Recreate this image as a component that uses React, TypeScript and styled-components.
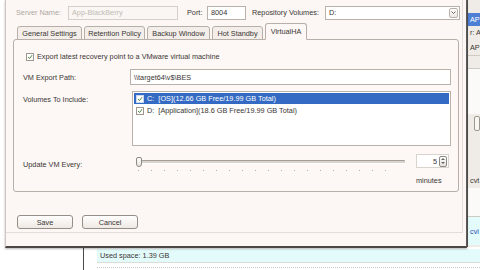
import styled, { createGlobalStyle } from 'styled-components';

const GlobalStyle = createGlobalStyle`
  html, body {
    margin: 0;
    padding: 0;
    background: #fff;
  }
  body {
    width: 480px;
    height: 270px;
    overflow: hidden;
    font-family: "Liberation Sans", Arial, sans-serif;
    font-size: 7.3px;
    color: #3a3634;
  }
`;

const Screen = styled.div`
  position: relative;
  width: 480px;
  height: 270px;
  display: flex;
  overflow: hidden;
`;

/* background application, mostly covered by the dialog */
const LeftNav = styled.div`
  width: 83px;
  flex-shrink: 0;
  background: #fff;
  border-right: 1px solid #4a4a4a;
`;
const Main = styled.div`
  flex: 1;
  min-width: 0;
  display: flex;
  flex-direction: column;
  background: #fff;
`;
const Upper = styled.div`
  height: 247px;
  display: flex;
  flex-shrink: 0;
`;
const Covered = styled.div`
  width: 383px;
  flex-shrink: 0;
  background: #f3f0ec;
`;
const Detail = styled.div`
  flex: 1;
  min-width: 0;
  border-left: 1px solid #555;
  background: #efece7;
  display: flex;
  flex-direction: column;
  padding-top: 13px;
  white-space: nowrap;
  overflow: hidden;
`;
const DetailHead = styled.div`
  height: 13px;
  line-height: 13px;
  background: #4d7fd4;
  color: #fff;
  padding-left: 2px;
`;
const DetailLine = styled.div<{ $h: number; $line?: boolean; $bg?: string }>`
  height: ${(p) => p.$h}px;
  flex-shrink: 0;
  display: flex;
  align-items: center;
  padding-left: 2px;
  background: ${(p) => p.$bg || 'transparent'};
  border-bottom: ${(p) => (p.$line ? '1px solid #cfcac3' : 'none')};
`;
const DetailButton = styled.div`
  width: 14px;
  height: 13px;
  margin-left: 4px;
  border: 1px solid #9d978f;
  border-radius: 2px;
  background: #f8f6f2;
`;
const LinkText = styled.span`
  color: #2a4fb8;
`;
const Bottom = styled.div`
  flex: 1;
  padding: 2px 0 0 13px;
  background: #fff;
`;
const UsedSpace = styled.div`
  height: 13px;
  line-height: 13px;
  background: #e4fbfb;
  padding-left: 3px;
  border-bottom: 1px solid #dcdcd6;
`;
const Dotted = styled.div`
  margin-top: 4px;
  border-top: 1px dotted #c8c8c8;
`;

/* dialog */
const Dialog = styled.div`
  position: absolute;
  left: 5px;
  top: 0;
  width: 462px;
  height: 248px;
  box-sizing: border-box;
  background: #fcf7f5;
  border-left: 1px solid #cfc7c1;
  border-right: 1px solid #5d5a57;
  border-bottom: 2px solid #4a4744;
  box-shadow: 0 1px 2px rgba(0, 0, 0, 0.3);
`;
const DialogBody = styled.div`
  height: 233px;
  margin-right: 3px;
  box-sizing: border-box;
  border-right: 1px solid #e4ddd8;
  border-bottom: 1px solid #e4ddd8;
  padding: 5px 0 0 7px;
  display: flex;
  flex-direction: column;
`;
const TopRow = styled.div`
  display: flex;
  align-items: center;
  height: 15px;
`;
const Label = styled.span<{ $w: number; $muted?: boolean; $ml?: number }>`
  width: ${(p) => p.$w}px;
  margin-left: ${(p) => p.$ml || 0}px;
  flex-shrink: 0;
  white-space: nowrap;
  color: ${(p) => (p.$muted ? '#aea7a1' : '#3a3634')};
`;
const TextBox = styled.div<{ $w: number; $disabled?: boolean; $h?: number }>`
  width: ${(p) => p.$w}px;
  height: ${(p) => p.$h || 14}px;
  box-sizing: border-box;
  border: 1px solid ${(p) => (p.$disabled ? '#d6cfc9' : '#b9b2ab')};
  background: ${(p) => (p.$disabled ? '#faf6f3' : '#fff')};
  color: ${(p) => (p.$disabled ? '#c3bbb5' : '#3a3634')};
  display: flex;
  align-items: center;
  padding-left: 3px;
  white-space: nowrap;
  flex-shrink: 0;
`;
const Combo = styled(TextBox)`
  justify-content: space-between;
  padding-right: 1px;
`;
const DropButton = styled.div`
  width: 9px;
  height: 10px;
  box-sizing: border-box;
  border: 1px solid #b9b2ab;
  border-radius: 2px;
  background: linear-gradient(#fff, #ebe6e1);
  display: flex;
  align-items: center;
  justify-content: center;
`;

const Tabs = styled.div`
  display: flex;
  align-items: flex-end;
  gap: 2px;
  margin: 2px 0 0 4px;
  height: 18px;
  position: relative;
  z-index: 1;
`;
const Tab = styled.div<{ $w: number; $active?: boolean }>`
  width: ${(p) => p.$w}px;
  height: ${(p) => (p.$active ? 17 : 14)}px;
  box-sizing: border-box;
  border: 1px solid #b7afa8;
  border-bottom: ${(p) => (p.$active ? '1px solid #fdf8f6' : '1px solid #b7afa8')};
  border-radius: 3px 3px 0 0;
  background: ${(p) => (p.$active ? '#fdf8f6' : '#f3eee9')};
  display: flex;
  align-items: center;
  justify-content: center;
  white-space: nowrap;
`;
const Panel = styled.div`
  margin-top: -1px;
  width: 446px;
  height: 153px;
  box-sizing: border-box;
  border: 1px solid #b7afa8;
  border-radius: 3px;
  background: #fdf8f6;
  padding: 12px 0 0 9px;
  display: flex;
  flex-direction: column;
`;
const CheckRow = styled.div`
  display: flex;
  align-items: center;
  gap: 3px;
  margin-left: 3px;
  height: 9px;
`;
const Check = styled.span<{ $onBlue?: boolean }>`
  width: 8px;
  height: 8px;
  box-sizing: border-box;
  border: 1px solid ${(p) => (p.$onBlue ? '#c9d6ef' : '#9f978f')};
  background: #fff;
  display: inline-flex;
  align-items: center;
  justify-content: center;
  flex-shrink: 0;
`;
const FormRow = styled.div<{ $mt: number }>`
  display: flex;
  align-items: flex-start;
  margin-top: ${(p) => p.$mt}px;
`;
const FormLabel = styled.span`
  width: 107px;
  flex-shrink: 0;
  padding-top: 4px;
`;
const ListBox = styled.div`
  width: 319px;
  height: 55px;
  box-sizing: border-box;
  border: 1px solid #b9b2ab;
  background: #fff;
  padding: 1px;
  margin-left: 2px;
`;
const ListItem = styled.div<{ $selected?: boolean }>`
  height: 11px;
  margin-bottom: 1px;
  display: flex;
  align-items: center;
  gap: 3px;
  padding-left: 2px;
  white-space: pre;
  background: ${(p) => (p.$selected ? '#346ac3' : 'transparent')};
  color: ${(p) => (p.$selected ? '#fff' : '#3a3634')};
`;
const SliderRow = styled.div`
  display: flex;
  margin-top: 8px;
`;
const SliderLabel = styled.span`
  width: 113px;
  flex-shrink: 0;
  padding-top: 6px;
`;
const SliderArea = styled.div`
  width: 269px;
  flex-shrink: 0;
  padding-top: 3px;
`;
const Track = styled.div`
  position: relative;
  height: 10px;
  display: flex;
  align-items: center;
`;
const TrackLine = styled.div`
  width: 100%;
  height: 2px;
  border-top: 1px solid #a59e97;
  border-bottom: 1px solid #fff;
  background: #d9d3cd;
  border-radius: 1px;
`;
const Thumb = styled.div`
  position: absolute;
  left: 0;
  top: 0;
  width: 6px;
  height: 10px;
  box-sizing: border-box;
  border: 1px solid #8f8983;
  border-radius: 2px 2px 3px 3px;
  background: linear-gradient(#fff, #e8e3de);
`;
const Ticks = styled.div`
  margin: 3px 0 0 2px;
  width: 256px;
  height: 1px;
  background: repeating-linear-gradient(to right, #b6afa8 0 1px, transparent 1px 13px);
`;
const SpinColumn = styled.div`
  margin-left: 11px;
  display: flex;
  flex-direction: column;
  align-items: flex-start;
`;
const SpinBox = styled.div`
  width: 33px;
  height: 14px;
  box-sizing: border-box;
  border: 1px solid #d9d3ce;
  background: #fff;
  display: flex;
  align-items: center;
  justify-content: flex-end;
  gap: 2px;
  padding-right: 1px;
`;
const SpinButtons = styled.div`
  width: 8px;
  height: 11px;
  box-sizing: border-box;
  border: 1px solid #8f8983;
  border-radius: 2px;
  background: linear-gradient(#fff, #e6e1dc);
  display: flex;
  flex-direction: column;
  justify-content: space-around;
  align-items: center;
`;
const Minutes = styled.span`
  margin-top: 8px;
`;
const ButtonRow = styled.div`
  display: flex;
  gap: 9px;
  margin: 23px 0 0 4px;
`;
const Button = styled.div`
  width: 56px;
  height: 14px;
  box-sizing: border-box;
  border: 1px solid #958e87;
  border-radius: 3px;
  background: linear-gradient(#fffefd, #eee9e4);
  display: flex;
  align-items: center;
  justify-content: center;
`;

const Tick = ({ color }: { color: string }) => (
  <svg width="6" height="6" viewBox="0 0 6 6">
    <path d="M1 3 L2.5 4.6 L5 1.2" stroke={color} strokeWidth="1" fill="none" />
  </svg>
);

const Chevron = () => (
  <svg width="5" height="3" viewBox="0 0 5 3">
    <path d="M0.5 0.5 L2.5 2.5 L4.5 0.5" stroke="#6b6560" strokeWidth="1" fill="none" />
  </svg>
);

const SpinArrow = ({ up }: { up?: boolean }) => (
  <svg width="4" height="2" viewBox="0 0 4 2">
    <path d={up ? 'M0 2 L2 0 L4 2 Z' : 'M0 0 L2 2 L4 0 Z'} fill="#6b6560" />
  </svg>
);

export default function App() {
  return (
    <Screen>
      <GlobalStyle />
      <LeftNav />
      <Main>
        <Upper>
          <Covered />
          <Detail>
            <DetailHead>AP</DetailHead>
            <DetailLine $h={13}>r: A</DetailLine>
            <DetailLine $h={16} $line>
              AP
            </DetailLine>
            <DetailLine $h={12} $line />
            <DetailLine $h={45} $bg="#fbfaf8" />
            <DetailLine $h={18}>
              <DetailButton />
            </DetailLine>
            <DetailLine $h={40} />
            <DetailLine $h={16}>cvt</DetailLine>
            <DetailLine $h={28} $line $bg="#fbfaf8" />
            <DetailLine $h={28} $bg="#e4fbfb">
              <LinkText>cvi</LinkText>
            </DetailLine>
          </Detail>
        </Upper>
        <Bottom>
          <UsedSpace>Used space: 1.39 GB</UsedSpace>
          <Dotted />
        </Bottom>
      </Main>

      <Dialog>
        <DialogBody>
          <TopRow>
            <Label $w={52} $ml={3} $muted>
              Server Name:
            </Label>
            <TextBox $w={110} $disabled>
              App-BlackBerry
            </TextBox>
            <Label $w={20} $ml={9}>
              Port:
            </Label>
            <TextBox $w={39}>8004</TextBox>
            <Label $w={73} $ml={6}>
              Repository Volumes:
            </Label>
            <Combo $w={135}>
              D:
              <DropButton>
                <Chevron />
              </DropButton>
            </Combo>
          </TopRow>

          <Tabs>
            <Tab $w={65}>General Settings</Tab>
            <Tab $w={61}>Retention Policy</Tab>
            <Tab $w={63}>Backup Window</Tab>
            <Tab $w={51}>Hot Standby</Tab>
            <Tab $w={42} $active>
              VirtualHA
            </Tab>
          </Tabs>

          <Panel>
            <CheckRow>
              <Check>
                <Tick color="#4a8a3a" />
              </Check>
              Export latest recovery point to a VMware virtual machine
            </CheckRow>

            <FormRow $mt={8}>
              <FormLabel>VM Export Path:</FormLabel>
              <TextBox $w={321} $h={16}>
                \\target64\v$\BES
              </TextBox>
            </FormRow>

            <FormRow $mt={6}>
              <FormLabel>Volumes To Include:</FormLabel>
              <ListBox>
                <ListItem $selected>
                  <Check $onBlue>
                    <Tick color="#4a8a3a" />
                  </Check>
                  {'C:  [OS](12.66 GB Free/19.99 GB Total)'}
                </ListItem>
                <ListItem>
                  <Check>
                    <Tick color="#4a8a3a" />
                  </Check>
                  {'D:  [Application](18.6 GB Free/19.99 GB Total)'}
                </ListItem>
              </ListBox>
            </FormRow>

            <SliderRow>
              <SliderLabel>Update VM Every:</SliderLabel>
              <SliderArea>
                <Track>
                  <TrackLine />
                  <Thumb />
                </Track>
                <Ticks />
              </SliderArea>
              <SpinColumn>
                <SpinBox>
                  5
                  <SpinButtons>
                    <SpinArrow up />
                    <SpinArrow />
                  </SpinButtons>
                </SpinBox>
                <Minutes>minutes</Minutes>
              </SpinColumn>
            </SliderRow>
          </Panel>

          <ButtonRow>
            <Button>Save</Button>
            <Button>Cancel</Button>
          </ButtonRow>
        </DialogBody>
      </Dialog>
    </Screen>
  );
}
